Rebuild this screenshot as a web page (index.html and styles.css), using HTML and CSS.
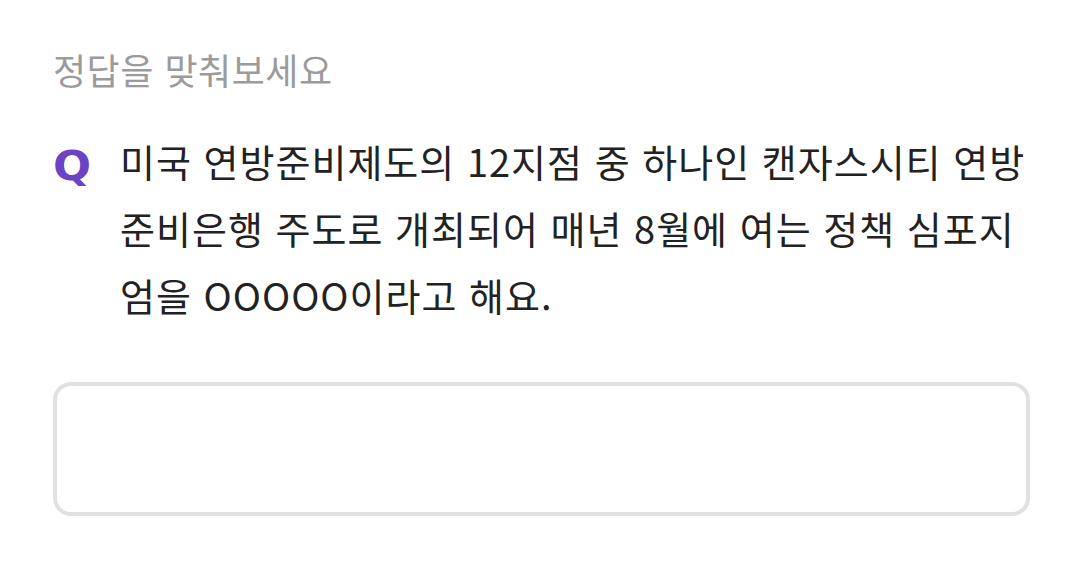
FILE: index.html
```html
<!DOCTYPE html>
<html lang="ko">
<head>
<meta charset="utf-8">
<link rel="stylesheet" href="styles.css">
</head>
<body>
<main class="quiz">
  <h1 class="title">정답을 맞춰보세요</h1>
  <div class="question">
    <span class="q-mark">Q</span>
    <p class="q-text">미국 연방준비제도의 12지점 중 하나인 캔자스시티 연방 준비은행 주도로 개최되어 매년 8월에 여는 정책 심포지엄을 OOOOO이라고 해요.</p>
  </div>
  <div class="answer-box"></div>
</main>
</body>
</html>
```
FILE: styles.css
```css
html, body {
  margin: 0;
  padding: 0;
  background: #ffffff;
}
body {
  font-family: "Noto Sans CJK KR", "Noto Sans", sans-serif;
}
.quiz {
  padding: 46px 46px 0 53px;
}
.title {
  margin: 0;
  font-size: 36px;
  font-weight: 400;
  letter-spacing: 0.5px;
  color: #9b9b9b;
  line-height: 46px;
}
.question {
  display: flex;
  margin-top: 35px;
}
.q-mark {
  flex: 0 0 67px;
  font-family: "DejaVu Sans", sans-serif;
  font-weight: 700;
  font-size: 40px;
  color: #6b43c4;
  line-height: 67px;
  margin-top: 6px;
  transform: scaleX(1.12);
  transform-origin: left center;
}
.q-text {
  margin: 0;
  font-size: 38px;
  letter-spacing: 1px;
  color: #222222;
  line-height: 67px;
  max-width: 912px;
}
.answer-box {
  margin-top: 54px;
  height: 126px;
  border: 4px solid #e0e1e2;
  border-radius: 18px;
}
```
